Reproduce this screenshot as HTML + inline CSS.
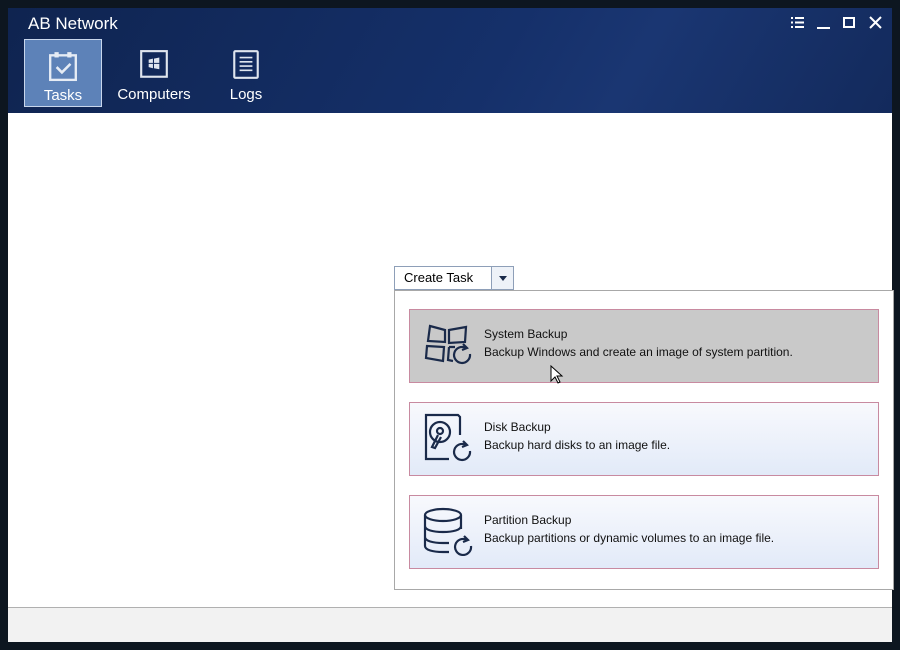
<!DOCTYPE html>
<html><head><meta charset="utf-8"><style>
*{margin:0;padding:0;box-sizing:border-box}
body{width:900px;height:650px;background:#0d1620;position:relative;overflow:hidden;font-family:"Liberation Sans",Arial,sans-serif}
.win{position:absolute;left:8px;top:8px;width:884px;height:634px;background:#fff}
.hdr{position:absolute;left:0;top:0;width:884px;height:105px;background:linear-gradient(120deg,#0f2450 0%,#15306a 55%,#1a3672 70%,#132a5c 100%)}
.title{position:absolute;left:20px;top:6px;color:#fff;font-size:17px}
.tab{position:absolute;top:31px;height:68px;color:#fff;font-size:15px;text-align:center}
.tab svg{display:block;margin:0 auto}
.tab.sel{background:#5d82b8;border:1px solid #c8d6ec}
.ctrl{position:absolute;top:6px;color:#fff}
.footer{position:absolute;left:0;top:599px;width:884px;height:35px;background:#f2f2f2;border-top:1px solid #b0b0b0}
.combo{position:absolute;left:386px;top:258px;width:120px;height:24px;border:1px solid #8e9fb8;background:#fff;font-size:13px}
.combo span{position:absolute;left:9px;top:3px}
.combo .arr{position:absolute;right:0;top:0;width:22px;height:22px;border-left:1px solid #8e9fb8;background:#eef2f8}
.panel{position:absolute;left:386px;top:282px;width:500px;height:300px;border:1px solid #a8a8a8;background:#fff}
.card{position:absolute;left:14px;width:470px;height:74px;border:1px solid #c88aa0;background:linear-gradient(#f8f9fd,#e2eaf8)}
.card.hot{background:#c9c9c9}
.card svg{position:absolute;left:12px;top:10px}
.card .t{position:absolute;left:74px;top:15px;font-size:12px;color:#111;line-height:18px}
</style></head><body>
<div class="win">
 <div class="hdr">
  <div class="title">AB Network</div>
  <div class="tab sel" style="left:16px;width:78px">
   <svg width="30" height="32" viewBox="0 0 28 30" style="margin-top:10px"><rect x="2" y="5" width="24" height="23" fill="none" stroke="#e6ecf5" stroke-width="2.2"/><rect x="6" y="2" width="4" height="5" fill="#e6ecf5"/><rect x="18" y="2" width="4" height="5" fill="#e6ecf5"/><path d="M8 16l5 5 8-8" fill="none" stroke="#e6ecf5" stroke-width="2.4"/></svg>
   <div style="margin-top:5px">Tasks</div></div>
  <div class="tab" style="left:104px;width:84px">
   <svg width="30" height="32" viewBox="0 0 28 30" style="margin-top:10px"><rect x="2" y="2" width="24" height="24" fill="none" stroke="#dfe5ee" stroke-width="2"/><path d="M9 10l4-1v4l-4 0zM14 9l5-1v5l-5 0zM9 14h4v4l-4-1zM14 14h5v5l-5-1z" fill="#dfe5ee"/></svg>
   <div style="margin-top:5px">Computers</div></div>
  <div class="tab" style="left:205px;width:66px">
   <svg width="30" height="32" viewBox="0 0 28 30" style="margin-top:10px"><rect x="3" y="2" width="22" height="25" rx="1" fill="none" stroke="#dfe5ee" stroke-width="2"/><path d="M8 8h12M8 12h12M8 16h12M8 20h12" stroke="#dfe5ee" stroke-width="1.5"/></svg>
   <div style="margin-top:5px">Logs</div></div>
  <svg class="ctrl" style="left:782px;top:8px" width="16" height="14"><path d="M1 2h2M5 2h9M1 6.5h2M5 6.5h9M1 11h2M5 11h9" stroke="#fff" stroke-width="2"/></svg>
  <svg class="ctrl" style="left:808px;top:8px" width="16" height="14"><path d="M1 12h13" stroke="#fff" stroke-width="2"/></svg>
  <svg class="ctrl" style="left:834px;top:8px" width="16" height="14"><rect x="2" y="2" width="10" height="9" fill="none" stroke="#fff" stroke-width="2"/></svg>
  <svg class="ctrl" style="left:860px;top:7px" width="16" height="16"><path d="M2 2l11 11M13 2L2 13" stroke="#fff" stroke-width="2"/></svg>
 </div>
 <div class="combo"><span>Create Task</span><div class="arr"><svg width="22" height="22"><path d="M7 9h8l-4 5z" fill="#1a2a4a"/></svg></div></div>
 <div class="panel">
  <div class="card hot" style="top:18px">
   <svg width="52" height="50" viewBox="0 0 52 50"><g fill="none" stroke="#1a2a4a" stroke-width="2.2"><path d="M8 6l15 4v12l-17-1z"/><path d="M27 10l17-3-1 15-16 1z"/><path d="M5 26l17 1-1 14-17-3z"/><path d="M27 27l6 0M27 27l-1 13 5 1"/><path d="M48 34a8 8 0 1 1-4-6"/><path d="M41 24l4 4-5 2"/></g></svg>
   <div class="t">System Backup<br>Backup Windows and create an image of system partition.</div></div>
  <div class="card" style="top:111px">
   <svg width="52" height="50" viewBox="0 0 52 50"><g fill="none" stroke="#1a2a4a" stroke-width="2.2"><path d="M27 46H4V2h32l2 2v18"/><circle cx="18" cy="19" r="10"/><circle cx="18" cy="18" r="3"/><path d="M16 22l-6 12 3 1 6-11"/><path d="M48 38a8 8 0 1 1-4-6"/><path d="M41 28l4 4-5 2"/></g></svg>
   <div class="t">Disk Backup<br>Backup hard disks to an image file.</div></div>
  <div class="card" style="top:204px">
   <svg width="52" height="50" viewBox="0 0 52 50"><g fill="none" stroke="#1a2a4a" stroke-width="2.2"><ellipse cx="21" cy="9" rx="18" ry="6"/><path d="M3 9v31c0 4 8 6 18 6h6M39 9v14M3 20c0 4 8 6 18 6s18-2 18-6M3 31c0 4 8 6 18 6h6"/><path d="M49 40a8 8 0 1 1-4-6"/><path d="M42 30l4 4-5 2"/></g></svg>
   <div class="t">Partition Backup<br>Backup partitions or dynamic volumes to an image file.</div></div>
 </div>
 <svg style="position:absolute;left:542px;top:357px" width="14" height="20"><path d="M1 1v15l4-4 3 6 2-1-3-6h5z" fill="#fff" stroke="#000"/></svg>
 <div class="footer"></div>
</div>
</body></html>
